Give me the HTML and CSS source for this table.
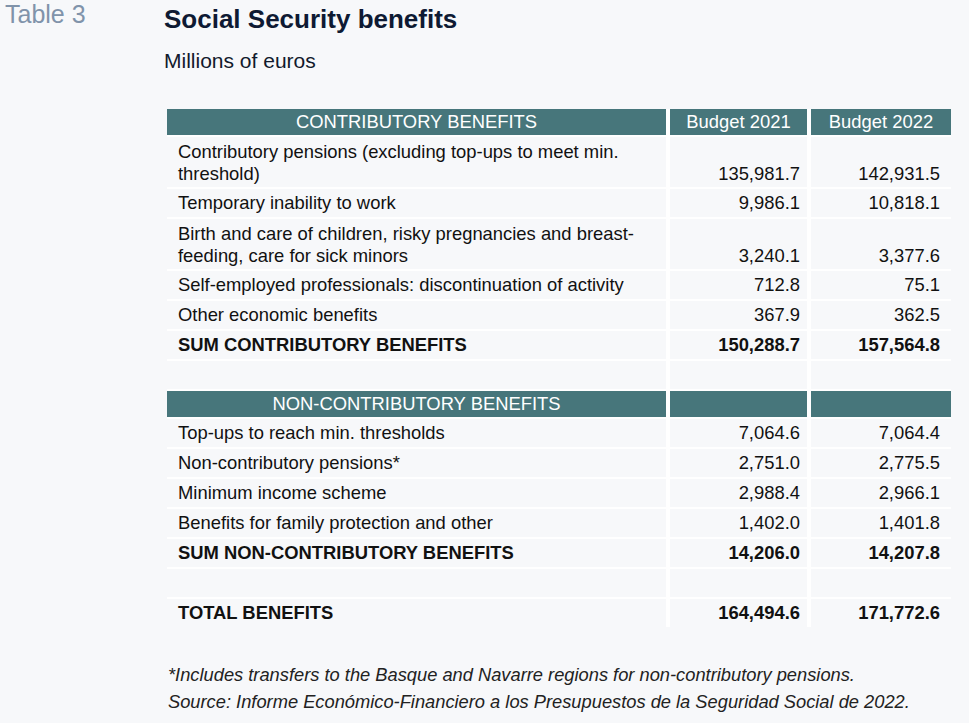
FILE: index.html
```html
<!DOCTYPE html>
<html lang="en">
<head>
<meta charset="utf-8">
<title>Table 3 - Social Security benefits</title>
<link rel="stylesheet" href="styles.css">
</head>
<body>
<div class="page">
  <div class="label">Table 3</div>
  <div class="main">
    <h1 class="title">Social Security benefits</h1>
    <p class="subtitle">Millions of euros</p>
    <table class="data">
      <colgroup>
        <col class="c-name">
        <col class="c-num">
        <col class="c-num2">
      </colgroup>
      <tr class="head">
        <th>CONTRIBUTORY BENEFITS</th>
        <th>Budget 2021</th>
        <th>Budget 2022</th>
      </tr>
      <tr class="tall">
        <td>Contributory pensions (excluding top-ups to meet min. threshold)</td>
        <td class="num">135,981.7</td>
        <td class="num">142,931.5</td>
      </tr>
      <tr>
        <td>Temporary inability to work</td>
        <td class="num">9,986.1</td>
        <td class="num">10,818.1</td>
      </tr>
      <tr class="tall">
        <td>Birth and care of children, risky pregnancies and breast-feeding, care for sick minors</td>
        <td class="num">3,240.1</td>
        <td class="num">3,377.6</td>
      </tr>
      <tr>
        <td>Self-employed professionals: discontinuation of activity</td>
        <td class="num">712.8</td>
        <td class="num">75.1</td>
      </tr>
      <tr>
        <td>Other economic benefits</td>
        <td class="num">367.9</td>
        <td class="num">362.5</td>
      </tr>
      <tr class="sum">
        <td>SUM CONTRIBUTORY BENEFITS</td>
        <td class="num">150,288.7</td>
        <td class="num">157,564.8</td>
      </tr>
      <tr class="empty">
        <td></td><td></td><td></td>
      </tr>
      <tr class="head">
        <th>NON-CONTRIBUTORY BENEFITS</th>
        <th></th>
        <th></th>
      </tr>
      <tr>
        <td>Top-ups to reach min. thresholds</td>
        <td class="num">7,064.6</td>
        <td class="num">7,064.4</td>
      </tr>
      <tr>
        <td>Non-contributory pensions*</td>
        <td class="num">2,751.0</td>
        <td class="num">2,775.5</td>
      </tr>
      <tr>
        <td>Minimum income scheme</td>
        <td class="num">2,988.4</td>
        <td class="num">2,966.1</td>
      </tr>
      <tr>
        <td>Benefits for family protection and other</td>
        <td class="num">1,402.0</td>
        <td class="num">1,401.8</td>
      </tr>
      <tr class="sum">
        <td>SUM NON-CONTRIBUTORY BENEFITS</td>
        <td class="num">14,206.0</td>
        <td class="num">14,207.8</td>
      </tr>
      <tr class="empty">
        <td></td><td></td><td></td>
      </tr>
      <tr class="sum total">
        <td>TOTAL BENEFITS</td>
        <td class="num">164,494.6</td>
        <td class="num">171,772.6</td>
      </tr>
    </table>
    <div class="notes">
      <p>*Includes transfers to the Basque and Navarre regions for non-contributory pensions.</p>
      <p>Source: Informe Económico-Financiero a los Presupuestos de la Seguridad Social de 2022.</p>
    </div>
  </div>
</div>
</body>
</html>
```

FILE: styles.css
```css
html, body {
  margin: 0;
  padding: 0;
  background: #f7f8fa;
}

body {
  font-family: "Liberation Sans", Arial, sans-serif;
  color: #111;
}

.page {
  display: flex;
  padding: 0 0 0 5px;
}

.label {
  width: 159px;
  flex: none;
  font-size: 25px;
  line-height: 28px;
  color: #8093aa;
}

.main {
  flex: 1;
}

.title {
  margin: 0;
  padding-top: 4px;
  font-size: 26px;
  line-height: 30px;
  font-weight: bold;
  color: #0e1a33;
}

.subtitle {
  margin: 15px 0 0 0;
  font-size: 21px;
  line-height: 24px;
  color: #121a2c;
}

.data {
  margin: 36px 0 0 3px;
  border-collapse: separate;
  border-spacing: 0;
  table-layout: fixed;
  width: 784px;
  font-size: 18.4px;
  line-height: 22px;
}

.c-name { width: 499px; }
.c-num { width: 141px; }
.c-num2 { width: 144px; }

.data th,
.data td {
  padding: 3px 7px 3px 11px;
  background: #f7f8fa;
  vertical-align: bottom;
  text-align: left;
  border-top: 2px solid #ffffff;
}

.data tr:first-child th {
  border-top: 0;
}

.data th + th,
.data td + td {
  border-left: 4px solid #ffffff;
}

.data .head th {
  background: #47767b;
  color: #ffffff;
  font-weight: normal;
  text-align: center;
  padding: 2px 4px;
  height: 22px;
}

.data .tall td {
  padding-top: 4px;
  padding-bottom: 2px;
}

.data td.num {
  text-align: right;
  padding-right: 7px;
  padding-left: 4px;
  white-space: nowrap;
}

.data td.num:last-child {
  padding-right: 11px;
}

.data .sum td {
  font-weight: bold;
}

.data .empty td {
  height: 22px;
}

.notes {
  margin-top: 34px;
  font-style: italic;
  font-size: 18.3px;
  line-height: 27px;
  color: #222;
}

.notes p {
  margin: 0;
  padding-left: 4px;
}
```
